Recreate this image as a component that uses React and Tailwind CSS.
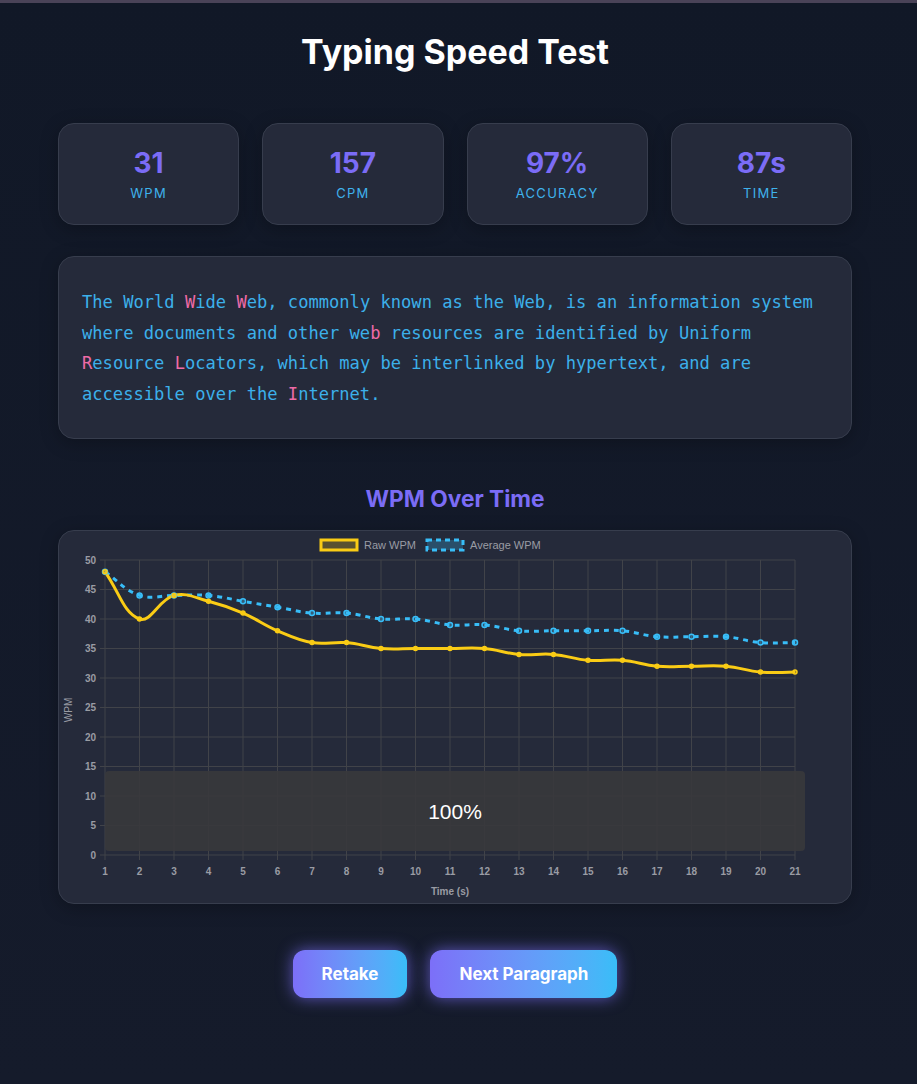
import React from "react";

const raw = [48,40,44,43,41,38,36,36,35,35,35,35,34,34,33,33,32,32,32,31,31];
const avg = [48,44,44,44,43,42,41,41,40,40,39,39,38,38,38,38,37,37,37,36,36];

const X0 = 46, XS = 34.5, Y0 = 324, YS = 5.9;
const px = (i) => X0 + i * XS;
const py = (v) => Y0 - v * YS;

function spline(vals, t = 0.4) {
  const pts = vals.map((v, i) => [px(i), py(v)]);
  const cps = pts.map((cur, i) => {
    const prev = pts[i - 1] || cur;
    const next = pts[i + 1] || cur;
    const d01 = Math.hypot(cur[0] - prev[0], cur[1] - prev[1]);
    const d12 = Math.hypot(next[0] - cur[0], next[1] - cur[1]);
    let s01 = d01 / (d01 + d12);
    let s12 = d12 / (d01 + d12);
    if (isNaN(s01)) s01 = 0;
    if (isNaN(s12)) s12 = 0;
    const fa = t * s01, fb = t * s12;
    return {
      p: [cur[0] - fa * (next[0] - prev[0]), cur[1] - fa * (next[1] - prev[1])],
      n: [cur[0] + fb * (next[0] - prev[0]), cur[1] + fb * (next[1] - prev[1])],
    };
  });
  let d = `M${pts[0][0]},${pts[0][1]}`;
  for (let i = 1; i < pts.length; i++) {
    d += ` C${cps[i - 1].n[0]},${cps[i - 1].n[1]} ${cps[i].p[0]},${cps[i].p[1]} ${pts[i][0]},${pts[i][1]}`;
  }
  return d;
}

function Chart() {
  const grid = "#414349";
  const tick = "#9a9ca4";
  const yTicks = [0,5,10,15,20,25,30,35,40,45,50];
  return (
    <svg width="792" height="372" className="block" style={{ fontFamily: "'Liberation Sans', Arial, sans-serif" }}>
      {/* legend */}
      <rect x="262" y="9" width="36" height="10" fill="rgba(250,204,21,0.25)" stroke="#facc15" strokeWidth="3" />
      <text x="305" y="18" fontSize="11" fill={tick}>Raw WPM</text>
      <rect x="368" y="9" width="36" height="10" fill="rgba(56,189,248,0.25)" stroke="#38bdf8" strokeWidth="3" strokeDasharray="5 4" />
      <text x="411" y="18" fontSize="11" fill={tick}>Average WPM</text>

      {/* grid */}
      {yTicks.map((v) => (
        <line key={"h" + v} x1={X0 - 5} x2={px(20)} y1={py(v)} y2={py(v)} stroke={grid} strokeWidth="1" />
      ))}
      {raw.map((_, i) => (
        <line key={"v" + i} x1={px(i)} x2={px(i)} y1={py(50)} y2={Y0 + 5} stroke={grid} strokeWidth="1" />
      ))}

      {/* y labels */}
      {yTicks.map((v) => (
        <text key={"yl" + v} x={37} y={py(v) + 3.5} fontSize="10" fontWeight="bold" fill={tick} textAnchor="end">{v}</text>
      ))}
      {/* x labels */}
      {raw.map((_, i) => (
        <text key={"xl" + i} x={px(i)} y={344} fontSize="10" fontWeight="bold" fill={tick} textAnchor="middle">{i + 1}</text>
      ))}
      <text x={391} y={364} fontSize="10" fontWeight="bold" fill={tick} textAnchor="middle">Time (s)</text>
      <text x={0} y={0} fontSize="10" fill={tick} textAnchor="middle" transform="translate(13,179) rotate(-90)">WPM</text>

      {/* lines */}
      <path d={spline(avg)} fill="none" stroke="#38bdf8" strokeWidth="3" strokeDasharray="5 5" />
      <path d={spline(raw)} fill="none" stroke="#facc15" strokeWidth="3" />
      {avg.map((v, i) => (
        <circle key={"ap" + i} cx={px(i)} cy={py(v)} r="2.5" fill="rgba(56,189,248,0.3)" stroke="#38bdf8" strokeWidth="1.5" />
      ))}
      {raw.map((v, i) => (
        <circle key={"rp" + i} cx={px(i)} cy={py(v)} r="2" fill="rgba(250,204,21,0.6)" stroke="#facc15" strokeWidth="1.5" />
      ))}
    </svg>
  );
}

const P = ({ children }) => <span className="text-[#ee6aa7]">{children}</span>;

export default function App() {
  const stats = [
    ["31", "WPM"],
    ["157", "CPM"],
    ["97%", "Accuracy"],
    ["87s", "Time"],
  ];
  return (
    <div className="min-h-screen bg-gradient-to-b from-[#111827] to-[#151b2b] font-['Inter',sans-serif]">
      <div className="h-[3px] bg-[#4a4358]" />
      <div className="pl-[58px] pr-[65px] pt-[29px] pb-[80px]">
        <h1 className="text-center text-[34px] leading-[40px] font-bold text-white">Typing Speed Test</h1>

        <div className="mt-[51px] grid grid-cols-4 gap-[23px]">
          {stats.map(([n, l]) => (
            <div key={l} className="rounded-2xl border border-[#373d4d] bg-[#252a3a] py-[22px] text-center shadow-[0_4px_18px_rgba(0,0,0,0.25)]">
              <div className="text-[28px] leading-[34px] font-bold text-[#7b6cf6]">{n}</div>
              <div className="mt-1 text-[13px] leading-[18px] uppercase tracking-widest text-[#3fb2ec]">{l}</div>
            </div>
          ))}
        </div>

        <div className="mt-[31px] rounded-2xl border border-[#373d4d] bg-[#252a3a] pl-[23px] pr-6 pt-[30px] pb-[29px] shadow-[0_4px_18px_rgba(0,0,0,0.25)]">
          <p className="font-['DejaVu_Sans_Mono',monospace] text-[17.1px] leading-[30.6px] text-[#3cb0ea]">
            The World <P>W</P>ide <P>W</P>eb, commonly known as the Web, is an information system where documents and other we<P>b</P> resources are identified by Uniform <P>R</P>esource <P>L</P>ocators, which may be interlinked by hypertext, and are accessible over the <P>I</P>nternet.
          </p>
        </div>

        <h2 className="mt-[46px] text-center text-[22.7px] leading-[28px] font-bold text-[#7b6cf6]">WPM Over Time</h2>

        <div className="relative mt-[17px] rounded-2xl border border-[#373d4d] bg-[#252a3a] shadow-[0_4px_18px_rgba(0,0,0,0.25)]">
          <Chart />
          <div className="absolute left-[46px] top-[240px] flex h-[80px] w-[700px] items-center justify-center rounded-[4px] bg-[#38393c]/90">
            <span className="font-['Liberation_Sans',Arial,sans-serif] text-[21px] text-white">100%</span>
          </div>
        </div>

        <div className="mt-[46px] flex justify-center gap-[23px]">
          <button className="h-[48px] rounded-xl bg-gradient-to-r from-[#7c6ff8] to-[#38bdf8] px-[29px] text-[17px] font-bold text-white shadow-[0_0_16px_rgba(124,111,248,0.7)]">Retake</button>
          <button className="h-[48px] rounded-xl bg-gradient-to-r from-[#7c6ff8] to-[#38bdf8] px-[29px] text-[17px] font-bold text-white shadow-[0_0_16px_rgba(124,111,248,0.7)]">Next Paragraph</button>
        </div>
      </div>
    </div>
  );
}
